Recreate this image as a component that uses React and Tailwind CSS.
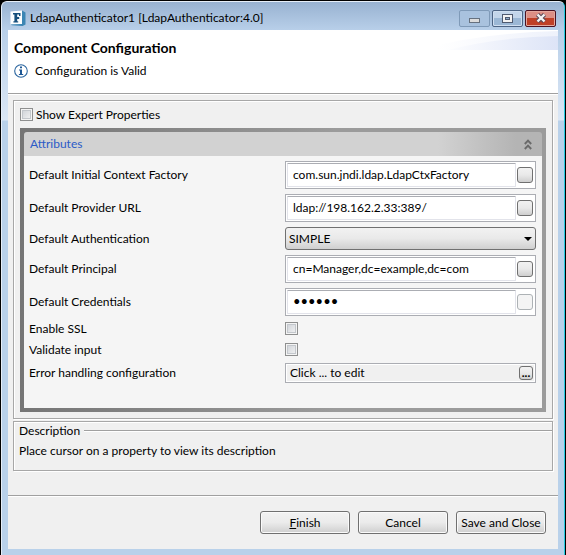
import clsx from 'clsx';

const FIELD = 'h-7 w-[251px] shrink-0 border border-[#abadb3] bg-white';
const FACE = 'bg-linear-to-b from-[#f2f2f2] via-[#e9e9e9] to-[#cfcfcf]';

function AppIcon() {
  return (
    <svg width="16" height="16" viewBox="0 0 16 16" aria-hidden="true">
      <path d="M0.5 1.5 L12 0.5 V14 L0.5 14.5 Z" fill="#fdfeff" />
      <path d="M12 0.5 L15.5 2.5 V14.5 L12.5 16 L2 15.2 L0.5 14.5 L12 14 Z" fill="#3c86b4" />
      <path d="M3 3 H10.5 V6 H9 V4.6 H7.2 V7 H9.2 V9 H7.2 V11.2 H8.2 V12.6 H3.4 V11.2 H4.4 V4.6 H3 Z" fill="#174f7c" />
    </svg>
  );
}

function InfoIcon() {
  return (
    <svg width="14" height="14" viewBox="0 0 14 14" aria-hidden="true">
      <circle cx="7" cy="7" r="6.3" fill="#fff" stroke="#2a659f" strokeWidth="1.1" />
      <path d="M6 2.6 H8 V4.3 H6 Z M5 5.5 H8 V10 H9.2 V11 H4.9 V10 H6 V6.5 H5 Z" fill="#1d5795" />
    </svg>
  );
}

function WindowButton({ label, variant, children }) {
  return (
    <button
      type="button"
      aria-label={label}
      className={clsx(
        'flex h-[17px] w-[31px] items-center justify-center rounded-[2px] border',
        variant === 'dim' && 'border-[#7f9ab8] bg-[#a9c2de]',
        variant === 'normal' &&
          'border-[#4d6484] bg-linear-to-b from-[#c3d5ea] from-50% to-[#9bb7d5] to-50% shadow-[inset_0_0_0_1px_#cfdef0]',
        variant === 'close' &&
          'border-[#4b1222] bg-linear-to-b from-[#dc8f85] from-50% to-[#bf4027] to-50% shadow-[inset_0_0_0_1px_#e3a79d]',
      )}
    >
      {children}
    </button>
  );
}

function TitleBar() {
  return (
    <div className="flex h-7 items-center bg-linear-to-b from-[#98b2d1] to-[#b8cfe9] px-2 pt-1">
      <AppIcon />
      <h1 className="ml-1 flex-1">LdapAuthenticator1 [LdapAuthenticator:4.0]</h1>
      <div className="flex gap-0.5">
        <WindowButton label="Minimize" variant="dim">
          <svg width="11" height="11" viewBox="0 0 11 11">
            <rect x="0.5" y="5.5" width="10" height="4" fill="#dcdcdc" stroke="#66717f" />
          </svg>
        </WindowButton>
        <WindowButton label="Maximize" variant="normal">
          <svg width="11" height="9" viewBox="0 0 11 9">
            <rect x="0.5" y="0.5" width="10" height="8" fill="#f2f2f2" stroke="#4f5a70" />
            <rect x="3.5" y="3.5" width="4" height="2" fill="#8fabc9" stroke="#4f5a70" />
          </svg>
        </WindowButton>
        <WindowButton label="Close" variant="close">
          <svg width="12" height="10" viewBox="0 0 12 10">
            <path d="M2.5 1.5 L9.5 8.5 M9.5 1.5 L2.5 8.5" stroke="#5a4a58" strokeWidth="4.4" />
            <path d="M2.5 1.5 L9.5 8.5 M9.5 1.5 L2.5 8.5" stroke="#f4f4f4" strokeWidth="2.4" />
          </svg>
        </WindowButton>
      </div>
    </div>
  );
}

function Banner() {
  return (
    <header className="relative h-16 border-b border-[#a0a0a0] bg-white px-1.5 pt-2">
      <svg className="absolute top-0 right-0" width="140" height="20" viewBox="0 0 140 20" aria-hidden="true">
        <defs>
          <linearGradient id="swoosh" gradientUnits="userSpaceOnUse" x1="20" x2="140">
            <stop offset="0" stopColor="#ffffff" />
            <stop offset="1" stopColor="#dde4f7" />
          </linearGradient>
        </defs>
        <path d="M0 20 Q60 3 140 1 V20 Z" fill="url(#swoosh)" opacity="0.5" />
        <path d="M30 20 Q80 7 140 6 V20 Z" fill="url(#swoosh)" />
      </svg>
      <h2 className="text-[14px] leading-5 font-bold">Component Configuration</h2>
      <p className="mt-1 flex items-center gap-[7px] leading-[18px]">
        <InfoIcon />
        Configuration is Valid
      </p>
    </header>
  );
}

function Check({ id }) {
  return (
    <input
      id={id}
      type="checkbox"
      className="size-[13px] shrink-0 appearance-none border border-[#8e8f8f] bg-linear-to-br from-[#cbcfd5] to-[#f6f6f6] shadow-[inset_0_0_0_1px_#f4f4f4,inset_0_0_0_2px_#c3c7cc] checked:from-[#4b6a9b]"
    />
  );
}

function Row({ id, label, children }) {
  return (
    <div className="flex items-center justify-between">
      <label htmlFor={id}>{label}</label>
      {children}
    </div>
  );
}

function TextField({ id, type = 'text', value, disabled }) {
  return (
    <div className={clsx(FIELD, 'flex items-center pr-0.5 pl-px')}>
      <input
        id={id}
        type={type}
        defaultValue={value}
        className={clsx(
          'h-6 min-w-0 flex-1 rounded-[1px] border border-[#e2e3ea] border-t-[#abadb3] px-[5px] pb-0.5 outline-none',
          type === 'password' && 'text-[13px]',
        )}
      />
      <button
        type="button"
        aria-label="Edit"
        disabled={disabled}
        className={clsx(
          'ml-px size-4 rounded-[3px] border',
          disabled ? 'border-[#adb2b5] bg-[#f4f4f4]' : ['border-[#707070]', FACE],
        )}
      />
    </div>
  );
}

function Attributes() {
  return (
    <section className="bg-linear-to-r from-[#757575] to-[#9b9b9b] to-60% p-1">
      <div className="flex h-6 items-center justify-between rounded-t-[3px] bg-linear-to-r from-[#d2d2d2] from-80% to-[#b4b4b4] to-95% pr-2.5 pl-1.5">
        <h3 className="text-[#2b5bc7]">Attributes</h3>
        <button type="button" aria-label="Collapse">
          <svg width="8" height="11" viewBox="0 0 8 11" fill="none" stroke="#6a6a6a" strokeWidth="1.9">
            <path d="M0.8 5 L4 1.6 L7.2 5 M0.8 10 L4 6.6 L7.2 10" />
          </svg>
        </button>
      </div>
      <div className="flex flex-col gap-[5px] bg-[#f5f5f5] pt-[5px] pr-1.5 pb-[25px] pl-[5px]">
        <Row id="factory" label="Default Initial Context Factory">
          <TextField id="factory" value="com.sun.jndi.ldap.LdapCtxFactory" />
        </Row>
        <Row id="url" label="Default Provider URL">
          <TextField id="url" value="ldap://198.162.2.33:389/" />
        </Row>
        <Row id="auth" label="Default Authentication">
          <div className="relative w-[251px] shrink-0">
            <select
              id="auth"
              className={clsx('block h-[23px] w-full appearance-none rounded-[3px] border border-[#707070] px-[3px]', FACE)}
            >
              <option>SIMPLE</option>
            </select>
            <svg className="pointer-events-none absolute top-2.5 right-1" width="8" height="4" viewBox="0 0 8 4">
              <path d="M0 0 H8 L4 4 Z" />
            </svg>
          </div>
        </Row>
        <Row id="principal" label="Default Principal">
          <TextField id="principal" value="cn=Manager,dc=example,dc=com" />
        </Row>
        <Row id="credentials" label="Default Credentials">
          <TextField id="credentials" type="password" value="secret" disabled />
        </Row>
        <Row id="ssl" label="Enable SSL">
          <div className="flex h-4 w-[251px] shrink-0 pt-px">
            <Check id="ssl" />
          </div>
        </Row>
        <Row id="validate" label="Validate input">
          <div className="flex h-4 w-[251px] shrink-0 pt-px">
            <Check id="validate" />
          </div>
        </Row>
        <Row id="errors" label="Error handling configuration">
          <div className="flex h-5 w-[251px] shrink-0 items-center justify-between border border-[#abadb3] bg-[#f0f0f0] pr-0.5 pl-1 shadow-[inset_0_0_0_1px_#fff]">
            <span>Click ... to edit</span>
            <button
              id="errors"
              type="button"
              className={clsx('flex size-3.5 items-center justify-center rounded-[3px] border border-[#707070] font-bold', FACE)}
            >
              ...
            </button>
          </div>
        </Row>
      </div>
    </section>
  );
}

function DialogButton({ children }) {
  return (
    <button
      type="button"
      className="h-[23px] w-[90px] rounded-[3px] border border-[#707070] bg-linear-to-b from-[#f2f2f2] via-[#ebebeb] via-50% to-[#cfcfcf] whitespace-nowrap shadow-[inset_0_0_0_1px_#fafafa]"
    >
      {children}
    </button>
  );
}

export default function App() {
  return (
    <div className="min-h-screen bg-black px-px pt-px font-[Lato,'Noto_Sans',sans-serif] text-[12px] leading-4 text-black">
      <div className="flex min-h-[calc(100vh-1px)] flex-col overflow-hidden rounded-t-[6px] border border-[#e6eef8] border-r-[#27cbe0] border-b-[#27cbe0] bg-[#b9d1ea]">
        <TitleBar />
        <div className="flex flex-1 flex-col bg-[linear-gradient(#b8cfe9,#dbe7f5_90px,#b9d1ea_91px)] px-1.5 pb-1.5">
          <main className="flex flex-1 flex-col bg-[#f0f0f0]">
            <Banner />
            <div className="flex flex-col gap-0.5 border-t border-white px-[5px] pt-[5px]">
              <div className="border border-[#a7a7a7] px-1.5 pt-[7px] pb-1.5 shadow-[inset_1px_1px_#fff,1px_1px_#fff]">
                <div className="mb-[7px] flex items-center gap-[3px]">
                  <Check id="expert" />
                  <label htmlFor="expert" className="leading-[13px]">Show Expert Properties</label>
                </div>
                <Attributes />
              </div>
              <section className="h-[50px] border border-[#a7a7a7] px-[5px] pt-px shadow-[inset_1px_1px_#fff,1px_1px_#fff]">
                <div className="flex items-center gap-1">
                  <h3>Description</h3>
                  <div className="-mr-[5px] h-0.5 flex-1 border-t border-[#a0a0a0] bg-white" />
                </div>
                <p className="mt-1">Place cursor on a property to view its description</p>
              </section>
            </div>
            <footer className="mt-6 flex flex-1 justify-end gap-2 border-t border-[#a0a0a0] px-3 py-[15px] shadow-[inset_0_1px_#fff]">
              <DialogButton><u>F</u>inish</DialogButton>
              <DialogButton>Cancel</DialogButton>
              <DialogButton>Save and Close</DialogButton>
            </footer>
          </main>
        </div>
      </div>
    </div>
  );
}
